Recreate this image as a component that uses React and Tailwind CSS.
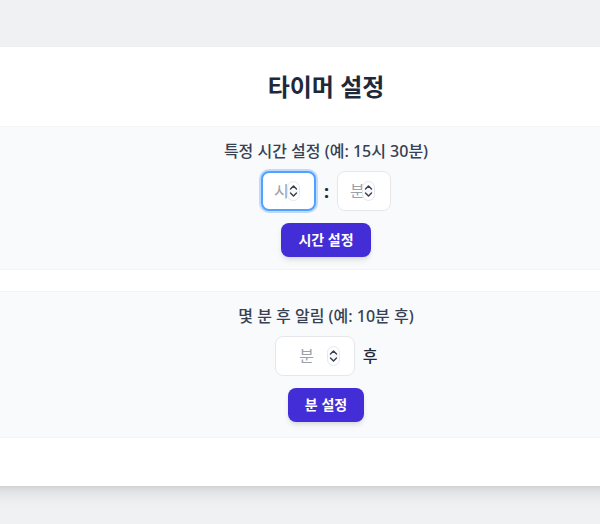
import React, { useState } from 'react';

const FONT = { fontFamily: '"Noto Sans", "Noto Sans CJK KR", sans-serif' };

// 숫자 입력 스피너 (항상 보이도록 직접 그림)
const Spinner = ({ className }) => (
    <span className={`pointer-events-none absolute top-1/2 -translate-y-1/2 w-[13px] h-[20px] rounded-[7px] border border-gray-200 bg-white flex items-center justify-center ${className}`}>
        <svg width="11" height="18" viewBox="0 0 11 18" fill="none" stroke="#374151" strokeWidth="1.5" strokeLinecap="round" strokeLinejoin="round">
            <path d="M2.5 7L5.5 4l3 3" />
            <path d="M1 9h9" stroke="#e5e7eb" strokeWidth="0.8" />
            <path d="M2.5 11l3 3 3-3" />
        </svg>
    </span>
);

const NumberInput = ({ value, onChange, placeholder, className, spinnerClass }) => (
    <div className="relative">
        <input
            type="number"
            value={value}
            onChange={e => onChange(e.target.value)}
            placeholder={placeholder}
            className={`h-10 text-center bg-white rounded-lg outline-none placeholder:text-gray-400 [appearance:textfield] [&::-webkit-inner-spin-button]:appearance-none [&::-webkit-outer-spin-button]:appearance-none ${className}`}
        />
        <Spinner className={spinnerClass} />
    </div>
);

const SetButton = ({ label, onClick }) => (
    <button
        onClick={onClick}
        className="mt-3 px-[17px] py-2 text-sm leading-[18px] font-bold text-white bg-indigo-700 hover:bg-indigo-600 rounded-lg shadow-md transition-all active:scale-95"
    >
        {label}
    </button>
);

const TimerSettings = () => {
    const [hour, setHour] = useState('');
    const [minute, setMinute] = useState('');
    const [after, setAfter] = useState('');

    return (
        <div className="w-[720px] shrink-0 bg-white shadow-lg pt-6 pb-12">
            <h2 className="text-2xl font-bold text-gray-800 text-center mb-[23px]">타이머 설정</h2>

            <div className="space-y-[21px]">
                {/* 특정 시각 */}
                <div className="bg-gray-50 border-y border-gray-100 p-3 flex flex-col items-center">
                    <div className="text-base font-medium text-gray-700 mb-2">특정 시간 설정 (예: 15시 30분)</div>
                    <div className="flex items-center gap-2">
                        <NumberInput
                            value={hour}
                            onChange={setHour}
                            placeholder="시"
                            className="w-[55px] pl-[11px] pr-[26px] border-2 border-blue-400 ring-2 ring-blue-200"
                            spinnerClass="right-[16px]"
                        />
                        <span className="text-lg font-bold text-gray-800">:</span>
                        <NumberInput
                            value={minute}
                            onChange={setMinute}
                            placeholder="분"
                            className="w-[54px] pl-3 pr-[27px] border border-gray-200"
                            spinnerClass="right-[16px]"
                        />
                    </div>
                    <SetButton label="시간 설정" />
                </div>

                {/* N분 후 */}
                <div className="bg-gray-50 border-y border-gray-100 pt-3 px-3 pb-[15px] flex flex-col items-center">
                    <div className="text-base font-medium text-gray-700 mb-2">몇 분 후 알림 (예: 10분 후)</div>
                    <div className="flex items-center gap-2">
                        <NumberInput
                            value={after}
                            onChange={setAfter}
                            placeholder="분"
                            className="w-20 pl-3 pr-[28px] border border-gray-200"
                            spinnerClass="right-[15px]"
                        />
                        <span className="text-base font-medium text-gray-800">후</span>
                    </div>
                    <SetButton label="분 설정" />
                </div>
            </div>
        </div>
    );
};

export default function App() {
    return (
        <div style={FONT} className="w-[600px] h-[524px] overflow-hidden bg-[#f0f1f3] pt-[47px] pl-[52px] flex justify-center items-start">
            <TimerSettings />
        </div>
    );
}
